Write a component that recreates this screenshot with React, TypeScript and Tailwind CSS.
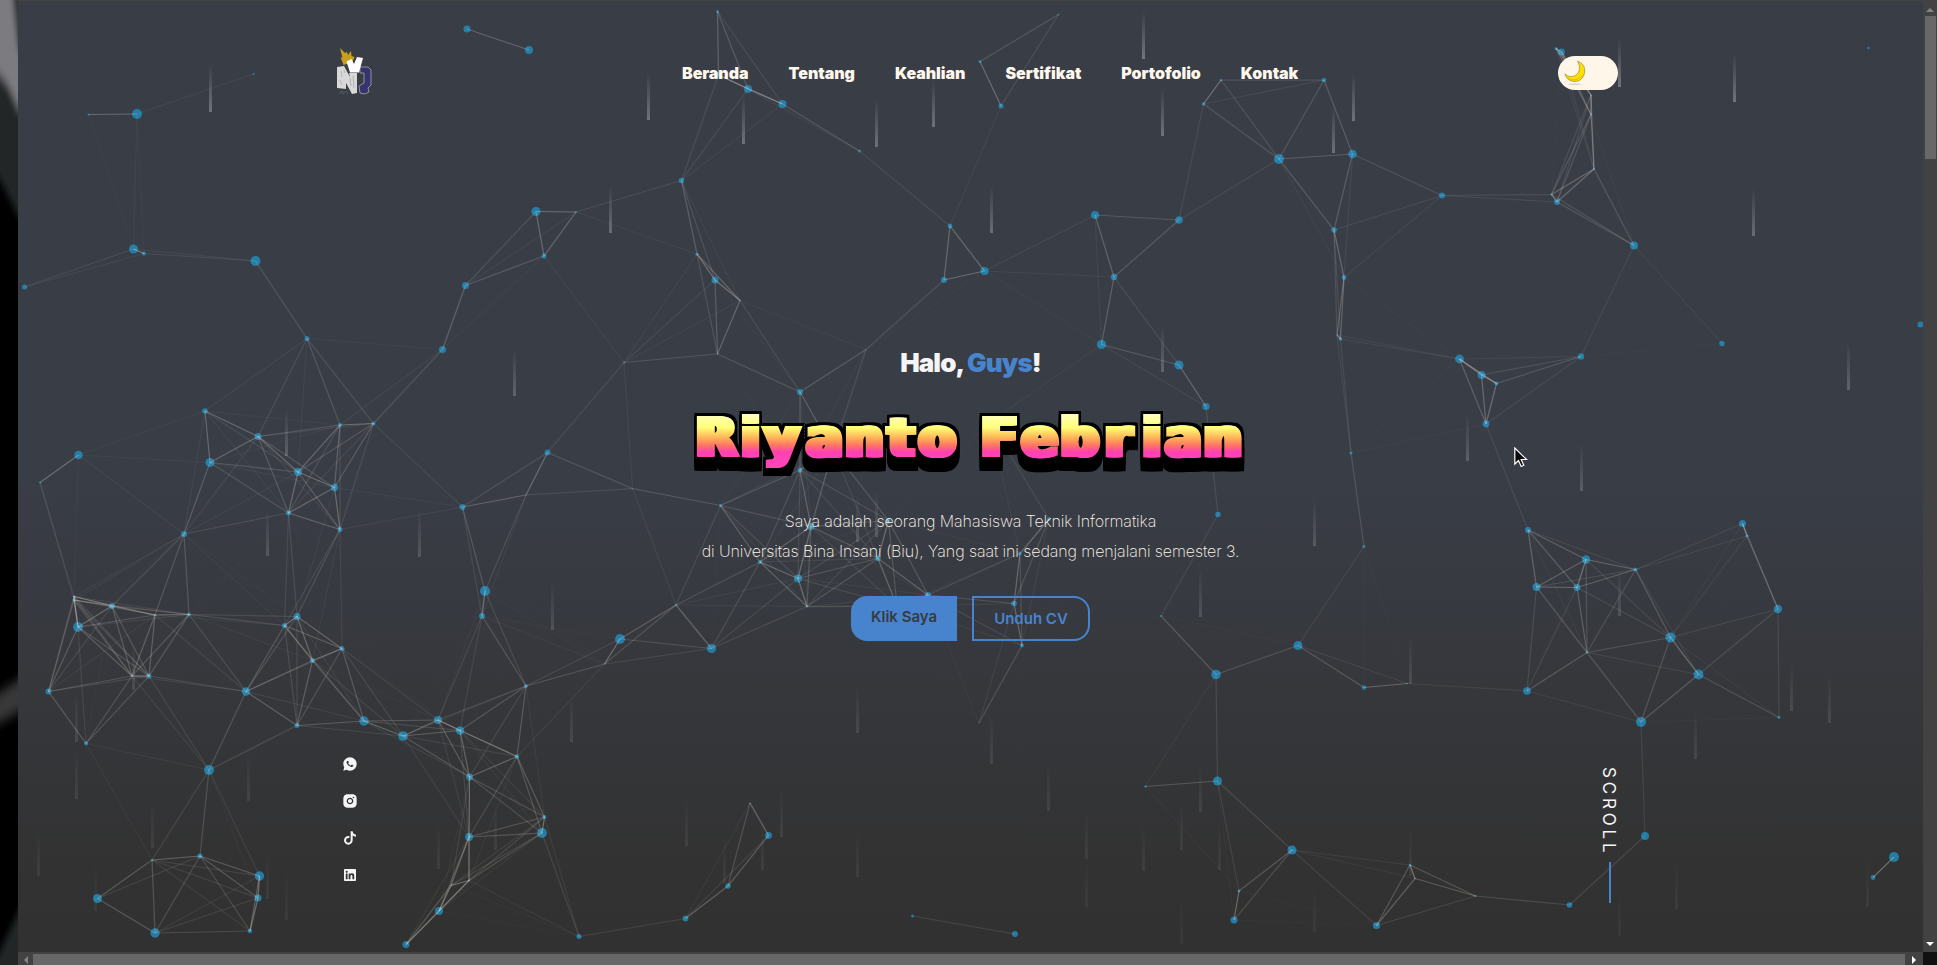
import React from "react";
import {
  RiInstagramFill,
  RiLinkedinBoxFill,
  RiTiktokFill,
  RiWhatsappFill,
} from "react-icons/ri";

type Particle = [x: number, y: number, r: number];

const LINK_DISTANCE = 150;
const LINK_OPACITY = 0.36;

const particles: Particle[] = [
  [467, 29, 3.5], [529, 50, 4], [253.5, 74, 1], [88.5, 114.5, 1], [137, 114, 5],
  [133.5, 249, 4.5], [144, 253.5, 2], [255.5, 261, 5], [24.5, 287, 2.5], [536, 211.5, 4.5],
  [576, 212, 1], [544, 256, 2.5], [465.5, 285.5, 3.5], [307, 338.5, 2.5], [442.5, 349.5, 3.5],
  [624, 362.5, 1], [205, 411, 2.8], [258, 436.5, 3.5], [340, 425, 2], [373.5, 423.5, 2],
  [78.5, 455, 4.2], [210, 462.5, 4.5], [298, 472, 4], [547.5, 452.5, 3], [40, 482.5, 1],
  [334.5, 487.5, 3.7], [288.5, 513, 2.5], [340, 529.5, 2.5], [184, 534, 3], [462.5, 507, 3],
  [526, 495, 0.5], [632.7, 488.7, 0.5], [74, 596.5, 1.3], [74, 600, 1.5], [112, 606, 3],
  [155, 615, 1], [78, 627, 5], [189, 614.5, 2], [297, 616.5, 3.6], [284.5, 625.5, 2.5],
  [485, 591, 5], [482, 616, 3], [342, 648.5, 2.5], [312.5, 660.5, 2.5], [620, 639, 5],
  [604.5, 664, 0.6], [48.5, 691.5, 3], [132, 676, 1], [149, 676, 2.5], [246, 691.5, 4.2],
  [526, 686, 2], [86, 743.5, 2], [297, 725.5, 2.5], [364, 721, 4.7], [403, 736, 4.8],
  [438, 720, 4], [460, 730.5, 4.2], [209, 770, 5], [517, 756.5, 2.3], [469.5, 777, 3.5],
  [544.5, 817, 2], [542, 833, 5], [469, 837, 4], [469, 880.5, 1], [451, 885.5, 0.5],
  [439, 911, 4], [406, 944.5, 3.5], [579, 936.5, 2.5], [152, 860, 1], [200, 856, 2.6],
  [259.5, 876, 4.7], [258, 898, 3.5], [97.5, 898.5, 4.5], [155, 933, 4.7], [250, 931, 2.3],
  [717.5, 11.5, 1.5], [718.5, 75, 3], [748, 89, 4], [782.5, 104, 4], [859.5, 151, 1.5],
  [681.5, 180.5, 2.8], [697, 254, 1.6], [715, 280, 3.5], [740, 300.5, 0.8], [1058.5, 14.5, 0.8],
  [980, 61.5, 1.5], [1001, 106, 2.5], [950, 226, 2.4], [984.5, 271, 4.1], [944, 280, 3],
  [1095, 215, 4], [1179, 220, 3.8], [1114, 277, 3.2], [1203.5, 104, 1.8], [1221, 80, 1.2],
  [1279, 159, 5], [717.5, 354, 0.7], [800, 392, 3], [866, 349.5, 0.5], [800, 470, 2.5],
  [833, 450, 3], [990, 422, 3],
  [1101.5, 344.5, 4.6], [1179, 365, 4.6], [1206, 406.5, 3.6], [1556, 48.5, 1.6], [1561.5, 52, 3.4],
  [1591, 95, 0.8], [1591, 114.5, 1], [1594, 169, 1], [1551.5, 194.5, 1], [1557, 202, 3],
  [1634, 245.5, 4], [1442, 195.5, 3], [1352.5, 154, 4.3], [1324, 80, 2.3], [1334, 230, 2.8],
  [1344, 277.5, 2.4], [1337, 335, 0.5], [1340.5, 339, 1.8], [1459.5, 359, 4.4], [1481.5, 375, 4],
  [1496.5, 383.5, 2], [1581, 356.5, 3.2], [1486, 424, 3.4], [1351, 453, 1.5], [1722, 343.5, 2.7],
  [1868.5, 48, 1.2], [1920.5, 324.5, 3], [1364, 546.5, 1.5], [1298, 645.5, 4.5], [1364, 687.5, 2.3],
  [1407.5, 683.5, 0.8], [1528, 530, 3], [1586, 559.5, 4.2], [1536.5, 587, 4], [1577, 587.5, 3.4],
  [1635.5, 569.5, 2], [1742.5, 523.5, 3.5], [1747, 536, 1.5], [1778, 609, 4.2], [1670.5, 637.5, 5],
  [1587, 652.5, 1], [1698.5, 674.5, 5], [1527, 691, 3.8], [1641, 722, 5], [1779, 717.5, 1.4],
  [1645, 836, 4], [1569.5, 905, 2.8], [1475.5, 896, 1], [1415, 878.5, 0.8], [1410, 865, 1.3],
  [1376.5, 925.5, 3.5], [1292, 850, 4.5], [1894, 857, 5], [1873, 877.5, 2.4], [720.5, 505.5, 1.4],
  [811, 526.5, 3.6], [888.5, 520.5, 2], [1049, 519, 2], [1020, 553.5, 1.7],
  [878, 558.5, 2.7], [760, 562, 2], [798, 578.5, 4], [676, 605, 1], [711.5, 648.5, 4.6],
  [807, 606.5, 1], [897, 606, 1], [928, 595, 3], [1014, 603.5, 2.8], [1022, 645.5, 2],
  [979, 723, 0.5], [1161, 616, 1.1], [1216, 674.5, 4.8], [1218, 514.5, 2.8], [1217.5, 781, 4.5],
  [1145.5, 786.5, 1.2], [1239, 891, 1.4], [1234, 920, 3.5], [912.5, 916, 1.4], [1015, 934, 3],
  [750, 803, 0.8], [768.5, 835.5, 3.4], [728, 886, 2.8], [685.5, 918.5, 2.9],
];

type Drop = [x: number, bottom: number];

const drops: Drop[] = [
  [210.5, 112], [648.5, 120], [610.5, 233], [514.5, 396], [286.5, 456], [743.5, 144],
  [876.5, 147], [933.5, 127], [1143.5, 59], [1162.5, 136], [991.5, 233], [1162.5, 372],
  [1353.5, 121], [1333.5, 153], [1619.5, 87], [1734.5, 102], [1753.5, 236], [1848.5, 390],
  [1467.5, 461], [1581.5, 491], [267.5, 556], [419.5, 557], [552.5, 630], [133.5, 690],
  [571.5, 742], [76.5, 742], [76.5, 799], [248.5, 801], [152.5, 848], [38.5, 876],
  [495.5, 850], [438.5, 869], [95.5, 911], [267.5, 899], [286.5, 920], [857.5, 542],
  [876.5, 537], [1200.5, 617], [857.5, 733], [991.5, 764], [1048.5, 811], [1200.5, 812],
  [781.5, 837], [686.5, 846], [762.5, 870], [724.5, 883], [857.5, 877], [1086.5, 859],
  [1086.5, 907], [1143.5, 871], [1181.5, 850], [1219.5, 870], [1181.5, 944], [1314.5, 546],
  [1619.5, 616], [1410.5, 684], [1791.5, 711], [1829.5, 723], [1695.5, 759], [1314.5, 932],
  [1410.5, 876], [1619.5, 936], [1676.5, 909], [1867.5, 907],
];

const menu = ["Beranda", "Tentang", "Keahlian", "Sertifikat", "Portofolio", "Kontak"];

function ParticleField() {
  const links: React.ReactNode[] = [];
  particles.forEach(([x1, y1], i) => {
    particles.slice(i + 1).forEach(([x2, y2], j) => {
      const d = Math.hypot(x1 - x2, y1 - y2);
      if (d < LINK_DISTANCE) {
        links.push(
          <line
            key={`${i}-${j}`}
            x1={x1}
            y1={y1}
            x2={x2}
            y2={y2}
            stroke="#fff5e6"
            strokeWidth="1.25"
            strokeOpacity={LINK_OPACITY * (1 - d / LINK_DISTANCE)}
          />
        );
      }
    });
  });
  return (
    <svg className="absolute inset-0 h-full w-full" viewBox="18 1 1905 951" aria-hidden="true">
      <defs>
        <linearGradient id="drop" x1="0" y1="0" x2="0" y2="1">
          <stop offset="0" stopColor="#fff" stopOpacity="0" />
          <stop offset="1" stopColor="#fff" />
        </linearGradient>
      </defs>
      {particles.map(([x, y, r], i) => (
        <circle key={i} cx={x} cy={y} r={r} fill="#1f93c8" fillOpacity="0.76" />
      ))}
      {links}
      {drops.map(([x, b], i) => (
        <rect
          key={i}
          x={x - 1.5}
          y={b - 48}
          width="3"
          height="48"
          fill="url(#drop)"
          opacity={0.31 - 0.27 * (b / 950)}
        />
      ))}
    </svg>
  );
}

function Logo() {
  return (
    <svg className="h-12 w-9" viewBox="0 0 36 48" aria-label="NVP">
      <path d="M4 1l5 5 2-1 1 3 3-4 .5 5 3 1-2 5-9 3-3-8 2 1z" fill="#c9a01c" />
      <path
        d="M24 20h8l3 3v15l-3 3 1 4-4 2-5-1-1-7 5-3V26h-4z"
        fill="#37336d"
        stroke="#a5a6b4"
        strokeWidth=".8"
      />
      <path d="M1 20l7-1 6 11-1-4h8v20l-5 1-6-11v6l-9-1z" fill="#d9d8d8" />
      <path d="M10.500 14.500l5-2.500 2.500 5 3-7 6 1-4 14.500h-9z" fill="#fff" />
      <path d="M5 24l1 6m-2 3l2 5m8-7l1 8m2-10l1 12M8 23l1 3" stroke="#a9a9ab" strokeWidth=".8" />
      <path d="M3 47l3-3 1 3 3-3 2 3" stroke="#62656c" strokeWidth=".8" fill="none" />
    </svg>
  );
}

function Moon() {
  return (
    <svg className="h-[26px] w-[22px]" viewBox="0 0 22 26" aria-hidden="true">
      <ellipse cx="11" cy="24.200" rx="7" ry=".8" fill="#d8d2c8" />
      <path
        d="M13.500 1.200C19 3 21.500 7.500 20.600 12.500 19.500 18.500 15.500 21.700 10.500 21.500 5.800 21.300 2 18.500.9 13.800 4 17 8.500 17.500 12 15 16.200 11.800 16.500 6 13.500 1.200z"
        fill="#fde000"
        stroke="#8c7b2b"
        strokeWidth=".6"
      />
      <path d="M3.500 18c5 3.300 12 2.200 14.800-3" stroke="#e2bd00" strokeWidth="1" fill="none" />
    </svg>
  );
}

const WORD_SIZE = 53;

/* Ink centre of each glyph, in em, used to centre it on its slot. */
const inkCentre: Record<string, number> = {
  R: 0.43, i: 0.1715, y: 0.326, a: 0.316, n: 0.357, t: 0.235, o: 0.343,
  F: 0.364, e: 0.34, b: 0.377, r: 0.29,
};

const words = [
  { text: "Riyanto", slots: [717.8, 749.7, 780.8, 822.5, 863.3, 899.7, 936.3] },
  { text: "Febrian", slots: [999.5, 1038.7, 1079.8, 1119.5, 1150.8, 1181.3, 1222] },
];

const faceOffsets = [-3, -1.5, 0, 1.5, 3];
const blockOffsets = [-5.5, -2.75, 0, 2.75, 5.5];
const blockDepths = [-2.5, 0, 3, 6, 9, 12, 14];

function WordArt() {
  const glyphs = words.map(({ text, slots }) => ({
    text,
    x: slots.map((c, i) => c - inkCentre[text[i]] * WORD_SIZE).join(" "),
  }));
  return (
    <svg
      className="mt-[25px] h-[68px] w-[556px] font-['DejaVu_Sans',sans-serif] text-[53px] font-bold"
      viewBox="692 408 556 68"
    >
      <defs>
        <linearGradient id="sunset" gradientUnits="userSpaceOnUse" x1="0" y1="416" x2="0" y2="457">
          <stop offset="0" stopColor="#ffffb4" />
          <stop offset="0.28" stopColor="#ffff78" />
          <stop offset="0.5" stopColor="#ffbe5a" />
          <stop offset="0.7" stopColor="#ff7a60" />
          <stop offset="0.88" stopColor="#ff40b0" />
          <stop offset="1" stopColor="#ff44b8" />
        </linearGradient>
        <g id="letters">
          {glyphs.map((g) => (
            <text key={g.text} x={g.x} y="455.7">
              {g.text}
            </text>
          ))}
        </g>
      </defs>
      <g strokeLinejoin="miter" strokeMiterlimit="3" strokeWidth="2">
        <g fill="#000" stroke="#000">
          {blockDepths.flatMap((dy) =>
            blockOffsets.map((dx) => (
              <use key={`${dx},${dy}`} href="#letters" transform={`translate(${dx} ${dy})`} />
            ))
          )}
        </g>
        <g fill="url(#sunset)" stroke="url(#sunset)">
          {faceOffsets.map((dx) => (
            <use key={dx} href="#letters" transform={`translate(${dx} 0)`} />
          ))}
        </g>
      </g>
    </svg>
  );
}

function DesktopEdge() {
  return (
    <svg className="h-[965px] w-[18px] shrink-0 bg-black" viewBox="0 0 18 965" aria-hidden="true">
      <defs>
        <filter id="soft" x="-100%" y="-10%" width="300%" height="120%">
          <feGaussianBlur stdDeviation="2.5 6" />
        </filter>
      </defs>
      <g filter="url(#soft)">
        <path d="M-29 -40H48V245L18 215 0 180-29 150z" fill="#242627" />
        <path d="M-29 -40H48V125L18 108 8 85 0 75-29 50z" fill="#7c7c80" />
        <path d="M11 -20h30V70L18 50z" fill="#333334" />
        <path d="M-29 712L48 660v36L-29 738z" fill="#383738" />
        <path d="M48 850v140H-9v-20z" fill="#242626" />
      </g>
    </svg>
  );
}

export default function App() {
  return (
    <div className="flex h-[965px] w-[1937px] overflow-hidden bg-[#424242] font-[Inter,sans-serif]">
      <DesktopEdge />

      <div className="flex min-w-0 flex-1 flex-col">
        <div className="h-px shrink-0 bg-[#444]" />
        <main className="relative flex h-[951px] shrink-0 flex-col overflow-hidden bg-[linear-gradient(to_bottom,#393d46_0,#393d46_50%,#323232_92%,#313131_100%)]">
          <ParticleField />

          <header className="relative flex h-36 items-center pr-[305px] pl-[318px]">
            <div className="-mt-[5px]">
              <Logo />
            </div>
            <nav className="ml-[310px] flex gap-10 text-base font-black tracking-[-0.03px] text-[#fff7ec]">
              {menu.map((item) => (
                <a key={item}>{item}</a>
              ))}
            </nav>
            <button className="ml-auto flex h-[34px] w-[60px] items-center rounded-full bg-[#fff6ea] pl-1.5">
              <Moon />
            </button>
          </header>

          <section className="relative flex flex-col items-center pt-[198px]">
            <h2 className="text-[26px] leading-10 font-black tracking-[-0.9px] text-[#f5f5f5]">
              Halo, <span className="text-[#4884cd]">Guys</span>!
            </h2>
            <h1>
              <WordArt />
            </h1>
            <p className="mt-[30px] text-center text-base leading-[30px] font-extralight tracking-[-0.09px] text-[#fff7ec]">
              Saya adalah seorang Mahasiswa Teknik Informatika
              <br />
              di Universitas Bina Insani (Biu), Yang saat ini sedang menjalani semester 3.
            </p>
            <div className="mt-[30px] flex gap-[15px] text-[15px] font-semibold">
              <a className="flex h-[45px] w-[106px] items-center justify-center rounded-l-2xl bg-[#4884cd] pb-0.5 text-[#363b44]">
                Klik Saya
              </a>
              <a className="flex h-[45px] w-[118px] items-center justify-center rounded-r-2xl border-2 border-[#4884cd] pt-0.5 text-[#4884cd]">
                Unduh CV
              </a>
            </div>
          </section>

          <footer className="absolute right-[305px] bottom-[49px] left-[324px] flex items-end justify-between text-[#f5f5f5]">
            <div className="mb-5 flex flex-col gap-[21px] text-base">
              <RiWhatsappFill />
              <RiInstagramFill />
              <RiTiktokFill />
              <RiLinkedinBoxFill />
            </div>
            <div className="flex w-4 flex-col items-center">
              <span className="mr-[3px] text-[17px] leading-4 tracking-[3.8px] [writing-mode:vertical-rl]">SCROLL</span>
              <span className="mt-[6px] h-[41px] w-0.5 bg-[#4884cd]" />
            </div>
          </footer>

          <svg className="absolute top-[446px] left-[1496px] h-[21px] w-[14px]" viewBox="0 0 14 21">
            <path
              d="M.8 1v16l3.700-3.500 2.700 6 2.600-1.200-2.600-5.800h5.300z"
              fill="#090909"
              stroke="#fff"
              strokeWidth="1.200"
            />
          </svg>
        </main>

        <div className="flex h-[13px] items-end justify-between bg-[#424242]">
          <div className="flex h-[11px] w-[15px] items-center justify-center">
            <span className="border-y-4 border-r-4 border-y-transparent border-r-[#858585]" />
          </div>
          <div className="h-[11px] flex-1 bg-[#686868]" />
          <div className="flex h-[11px] w-[18px] items-center justify-center">
            <span className="border-y-4 border-l-4 border-y-transparent border-l-white" />
          </div>
        </div>
      </div>

      <div className="flex w-[14px] shrink-0 flex-col items-center bg-[#424242]">
        <div className="flex h-4 items-center pt-1">
          <span className="border-x-4 border-b-4 border-x-transparent border-b-[#858585]" />
        </div>
        <div className="h-[143px] w-[11px] bg-[#686868]" />
        <div className="mt-auto flex h-4 items-center">
          <span className="border-x-4 border-t-4 border-x-transparent border-t-white" />
        </div>
        <div className="h-[13px] w-full bg-[#111]" />
      </div>
    </div>
  );
}
